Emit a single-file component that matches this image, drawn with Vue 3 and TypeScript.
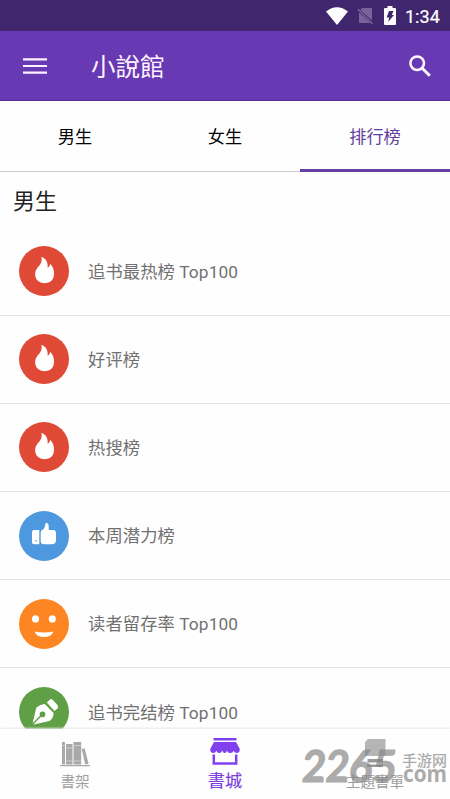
<script setup lang="ts">
type IconKind = 'fire' | 'thumb' | 'smile' | 'pen'

interface Ranking {
  title: string
  kind: IconKind
}

const tabs: string[] = ['男生', '女生', '排行榜']
const activeTab = 2

const rankings: Ranking[] = [
  { title: '追书最热榜 Top100', kind: 'fire' },
  { title: '好评榜', kind: 'fire' },
  { title: '热搜榜', kind: 'fire' },
  { title: '本周潜力榜', kind: 'thumb' },
  { title: '读者留存率 Top100', kind: 'smile' },
  { title: '追书完结榜 Top100', kind: 'pen' },
]
</script>

<template>
  <div class="screen">
    <div class="status">
      <svg class="wifi" viewBox="0 0 22 18"><path d="M0 4.600Q11-4.200 22 4.600L11 18Z" fill="#fff" /></svg>
      <svg class="sim" viewBox="0 0 17 18">
        <path d="M5.500 1H14q1 0 1 1V13.400L3.200 2.800ZM2 5.200 13.600 16H3q-1 0-1-1Z" fill="#78639b" />
        <path d="M.8 2 15.600 16.800" stroke="#78639b" stroke-width="1.400" />
      </svg>
      <svg class="battery" viewBox="0 0 12 19">
        <path d="M3.500 0h5v2H11q1 0 1 1v15q0 1-1 1H1q-1 0-1-1V3q0-1 1-1h2.500Z" fill="#fff" />
        <path d="M5 5h4.500L7.800 9H10L4.200 16 5.200 11.500H2.600Z" fill="#40266d" />
      </svg>
      <span class="clock">1:34</span>
    </div>

    <header class="appbar">
      <svg class="menu" viewBox="0 0 24 16"><path d="M0 1.300H24M0 8H24M0 14.700H24" stroke="#fff0ff" stroke-width="2.200" /></svg>
      <h1 class="title">小說館</h1>
      <svg class="search" viewBox="0 0 22 22">
        <circle cx="8.200" cy="8.200" r="6.800" fill="none" stroke="#fff5ff" stroke-width="2.500" />
        <path d="M13 13 20.800 20.800" stroke="#fff5ff" stroke-width="3" />
      </svg>
    </header>

    <nav class="tabs">
      <div v-for="(tab, i) in tabs" :key="tab" class="tab" :class="{ active: i === activeTab }">{{ tab }}</div>
    </nav>

    <main class="content">
      <h2 class="heading">男生</h2>
      <div v-for="item in rankings" :key="item.title" class="row">
        <svg class="badge" :class="item.kind" viewBox="0 0 50 50">
          <circle cx="25" cy="25" r="25" />
          <path
            v-if="item.kind === 'fire'"
            fill="#fff"
            d="M22.300 10.800C27 12.500 29.200 16.500 28.600 21.700 30.200 21 31 19.500 31.300 17.800 33.800 20.500 35.300 24 35 28.500 34.700 34 30.800 37.200 25.700 37.200 20.200 37.200 16.100 33.400 16.100 28.200 16.100 24.500 18.100 22 20.100 19.800 22.400 17.200 23.300 14.700 22.300 10.800Z"
          />
          <g v-else-if="item.kind === 'thumb'" fill="#fff">
            <path d="M15 19H20.300V33.200H15Q13 33.200 13 31.200V21Q13 19 15 19Z" />
            <path d="M21.700 21Q21.900 19.400 23.500 18.700 26 17.400 26.200 13.400 26.300 12 27.500 12 29.600 12.100 29.700 15.300V19.100H34Q37 19.100 37 22V29Q37 33.200 33 33.200H25Q21.700 33.200 21.700 30Z" />
            <circle cx="17" cy="29.700" r=".8" fill="#4e98df" />
          </g>
          <g v-else-if="item.kind === 'smile'" fill="#fff">
            <circle cx="16.500" cy="19.900" r="3.600" />
            <circle cx="33.300" cy="19.900" r="3.600" />
            <path d="M15.500 32.500Q25 34.500 34.500 32.500 32.500 38 25 38 17.500 38 15.500 32.500Z" />
          </g>
          <g v-else>
            <path fill="#fff" d="M27.800 15.500 31.300 12.300Q32.400 11.700 33.500 12.800L38.500 18Q39.600 19.500 38.600 21.200L35.500 24Z" />
            <path fill="#fff" d="M25.800 17.100 34.600 25.900Q34.300 31.500 30.500 33.900L14.900 37.500 13.600 36.500 17.300 20.500Q21.500 17.200 25.800 17.100Z" />
            <path d="M13.800 37 22.500 28.300" stroke="#5f9d47" stroke-width="1.400" />
            <circle cx="23.500" cy="27.400" r="2.800" />
          </g>
        </svg>
        <span class="name">{{ item.title }}</span>
      </div>
    </main>

    <footer class="bottom">
      <div class="item">
        <svg class="books" viewBox="0 0 30 25">
          <path fill="#a9a9a9" d="M2 0H5V22.500H2ZM6 2H12.500V22.500H6ZM13.500 0H21.200V22.500H13.500ZM21.700 7 24.700 6.200 28.600 21.800 25.200 22.500ZM0 23H30V24.300H0Z" />
          <path stroke="#d6d6d6" stroke-width=".8" d="M2 3.500H5M6 6H12.500M6 19H12.500M13.500 3.500H21.200M13.500 19H21.200" />
        </svg>
        <span class="label">書架</span>
      </div>
      <div class="item current">
        <svg class="store" viewBox="0 0 30 28">
          <path fill="#8140ee" d="M3.500 0H26.500V2.600H3.500ZM4 4H26L29.800 11Q29.800 15 26.700 15 24.200 15 23.700 12.800 22.500 15.200 20.200 15 17.500 15 17 12.500 16.400 15 14.800 15 13 15 12.300 12.500 11.500 15 9.200 15 7 15 6.300 12.800 5.500 15 3.300 15 .2 15 .2 11Z" />
          <path d="M3.800 16.500V25.500H26.200V16.500" fill="none" stroke="#8140ee" stroke-width="2.500" />
        </svg>
        <span class="label">書城</span>
      </div>
      <div class="item">
        <svg class="list" viewBox="0 0 21 28">
          <path fill="#b5b5b5" d="M3 0H20.500V17H0V3Z" />
          <path fill="#999" d="M2.500 20H18V23.500H2.500ZM2 25.500H18V28H2Z" />
        </svg>
        <span class="label">主題書單</span>
      </div>
      <svg class="mark" viewBox="0 0 154 70">
        <text class="digits" x="0" y="53" textLength="94" lengthAdjust="spacingAndGlyphs" transform="translate(10 0) skewX(-5)">2265</text>
        <text class="dot" x="107" y="52.500" textLength="44" lengthAdjust="spacingAndGlyphs">com</text>
        <text class="site" x="106" y="36.500" textLength="45" lengthAdjust="spacingAndGlyphs">手游网</text>
      </svg>
    </footer>
  </div>
</template>

<style>
body {
  margin: 0;
  background: #fff;
}
</style>

<style scoped>
.screen {
  width: 450px;
  height: 799px;
  display: flex;
  flex-direction: column;
  overflow: hidden;
  background: #fefefe;
  font-family: Roboto, "Noto Sans CJK SC", sans-serif;
}
svg {
  display: block;
  flex: none;
}
.status {
  height: 31px;
  flex: none;
  box-sizing: border-box;
  padding-right: 10px;
  display: flex;
  align-items: center;
  justify-content: flex-end;
  background: #40266d;
}
.wifi { width: 22px; height: 18px; }
.sim { width: 17px; height: 18px; margin-left: 9px; }
.battery { width: 12px; height: 19px; margin-left: 10px; }
.clock {
  margin-left: 9px;
  color: #fff;
  font-size: 18px;
  line-height: 31px;
  font-weight: 400;
  letter-spacing: 0.100px;
  -webkit-text-stroke: 0.200px #fff;
  padding-top: 2px;
}
.appbar {
  height: 70px;
  flex: none;
  box-sizing: border-box;
  padding: 0 19px 0 23px;
  display: flex;
  align-items: center;
  background: #673ab3;
  border-bottom: 1px solid #57309d;
}
.menu { width: 24px; height: 16px; }
.title {
  margin: 0 auto 0 44px;
  color: #fff3ff;
  font-size: 24.500px;
  line-height: 36px;
  font-weight: 400;
  font-family: "Noto Sans CJK TC", sans-serif;
}
.search { width: 22px; height: 22px; }
.tabs {
  height: 71px;
  flex: none;
  box-sizing: border-box;
  display: flex;
  border-bottom: 1px solid #c9c9c9;
}
.tab {
  width: 150px;
  height: 71px;
  box-sizing: border-box;
  color: #000;
  font-size: 17.200px;
  line-height: 73px;
  font-weight: 400;
  text-align: center;
}
.tab.active {
  color: #6340a0;
  border-bottom: 3px solid #6540a5;
}
.content {
  height: 557px;
  flex: none;
  overflow: hidden;
}
.heading {
  margin: 0;
  padding: 0 13px;
  height: 55.500px;
  color: #222;
  font-size: 22px;
  line-height: 59px;
  font-weight: 400;
}
.row {
  height: 88.200px;
  box-sizing: border-box;
  padding-left: 19px;
  display: flex;
  align-items: center;
  border-bottom: 1px solid #e2e2e2;
}
.badge { width: 50px; height: 50px; }
.fire { fill: #df4936; }
.thumb { fill: #4e98df; }
.smile { fill: #fd8522; }
.pen { fill: #5f9f45; }
.name {
  margin-left: 19px;
  padding-top: 1px;
  color: #717171;
  font-size: 17.300px;
  line-height: 26px;
  letter-spacing: 0.100px;
}
.bottom {
  height: 70px;
  flex: none;
  position: relative;
  display: grid;
  grid-template-columns: repeat(3, 1fr);
  background: #fefefe;
  box-shadow: 0 -1px 2px #e6e6e6;
  z-index: 1;
}
.item {
  display: flex;
  flex-direction: column;
  align-items: center;
  color: #a0a0a0;
}
.label {
  font-family: "Noto Sans CJK TC", sans-serif;
  font-size: 14.600px;
  line-height: 20px;
  margin-top: 4px;
}
.books { width: 30px; height: 25px; margin-top: 13px; }
.store { width: 30px; height: 28px; margin-top: 9px; }
.list { width: 21px; height: 28px; margin-top: 10px; }
.current { color: #7b3fe0; }
.current .label {
  font-size: 17.200px;
  line-height: 24px;
  -webkit-text-stroke: 0.150px currentColor;
  margin-top: 2px;
}
.mark {
  position: absolute;
  left: 296px;
  top: 0;
  width: 154px;
  height: 70px;
  overflow: visible;
  fill: #858585;
  opacity: 0.68;
}
.digits {
  font: 700 44px Lato, sans-serif;
  stroke: #858585;
  stroke-width: 1.200px;
  stroke-linejoin: round;
}
.dot { font: 700 24px "Open Sans", sans-serif; }
.site { font: 500 15px "Noto Sans CJK SC", sans-serif; }
</style>
